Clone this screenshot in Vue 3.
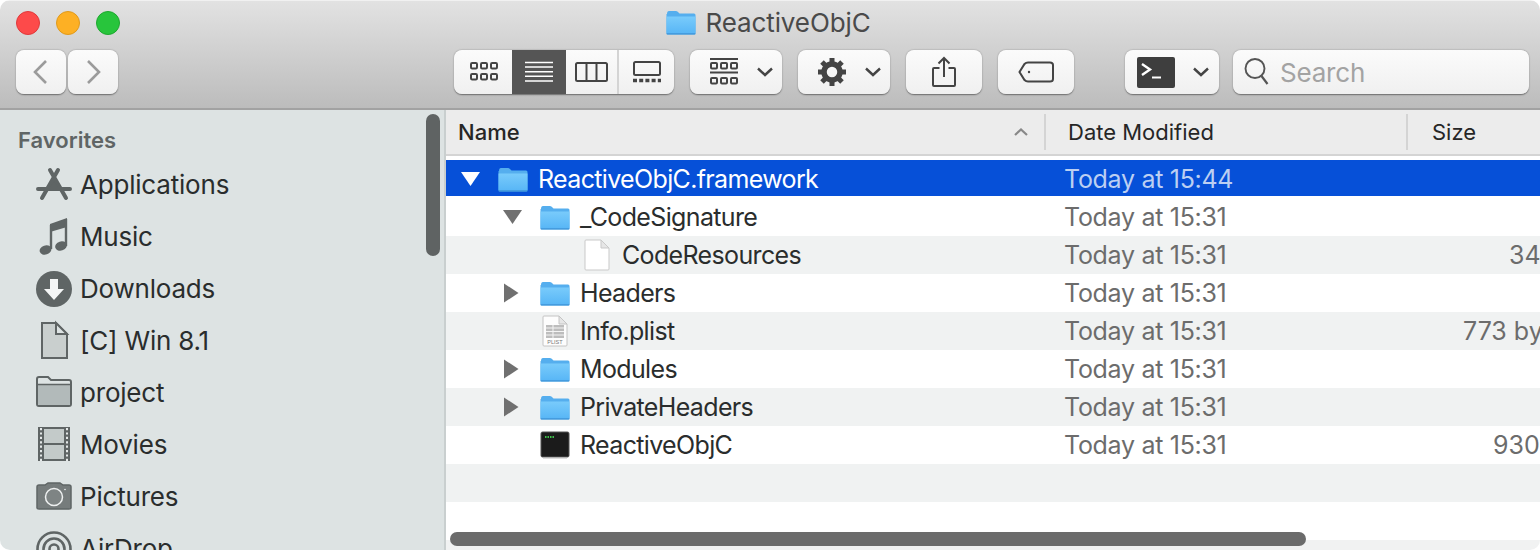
<script setup>
const favorites = [
  { name: 'Applications', icon: 'apps' },
  { name: 'Music', icon: 'music' },
  { name: 'Downloads', icon: 'downloads' },
  { name: '[C] Win 8.1', icon: 'doc' },
  { name: 'project', icon: 'folder' },
  { name: 'Movies', icon: 'movies' },
  { name: 'Pictures', icon: 'camera' },
  { name: 'AirDrop', icon: 'airdrop' },
]

// sizeAt: where the size text starts inside its column
const rows = [
  { name: 'ReactiveObjC.framework', date: 'Today at 15:44', depth: 0, arrow: 'down', icon: 'folder', selected: true },
  { name: '_CodeSignature', date: 'Today at 15:31', depth: 1, arrow: 'down', icon: 'folder' },
  { name: 'CodeResources', date: 'Today at 15:31', depth: 2, icon: 'file', size: '34 KB', sizeAt: 102 },
  { name: 'Headers', date: 'Today at 15:31', depth: 1, arrow: 'right', icon: 'folder' },
  { name: 'Info.plist', date: 'Today at 15:31', depth: 1, icon: 'plist', size: '773 bytes', sizeAt: 56 },
  { name: 'Modules', date: 'Today at 15:31', depth: 1, arrow: 'right', icon: 'folder' },
  { name: 'PrivateHeaders', date: 'Today at 15:31', depth: 1, arrow: 'right', icon: 'folder' },
  { name: 'ReactiveObjC', date: 'Today at 15:31', depth: 1, icon: 'exec', size: '930 KB', sizeAt: 86 },
]
</script>

<template>
  <div class="window">
    <svg width="0" height="0" class="defs">
      <defs>
        <linearGradient id="folderFill" x1="0" y1="0" x2="0" y2="1">
          <stop offset="0" stop-color="#79cbfb" />
          <stop offset="1" stop-color="#58b6f6" />
        </linearGradient>
        <symbol id="blueFolder" viewBox="0 0 30 25">
          <path d="M1 4 Q1 1 3 1 H10 Q11.5 1 12.5 2.5 L13.5 3.5 H28 Q29.5 3.5 29.5 5 V23 Q29.5 24.5 28 24.5 H2 Q.5 24.5 .5 23 V4 Z" fill="#55aeee" />
          <path d="M.5 6.5 H29.5 V22.8 Q29.5 23.5 28 23.5 H2 Q.5 23.5 .5 22.8 Z" fill="url(#folderFill)" />
          <path d="M.5 23.2 H29.5 V23.4 Q29.5 24.6 28 24.6 H2 Q.5 24.6 .5 23.4 Z" fill="#3f95d8" />
        </symbol>
      </defs>
    </svg>

    <header class="titlebar">
      <div class="title-row">
        <div class="lights">
          <span class="light red"></span>
          <span class="light yellow"></span>
          <span class="light green"></span>
        </div>
        <div class="title">
          <svg class="title-icon" width="30" height="25"><use href="#blueFolder" /></svg>
          <span>ReactiveObjC</span>
        </div>
        <div></div>
      </div>

      <div class="toolbar">
        <div class="nav">
          <button class="btn nav-btn">
            <svg width="50" height="44" viewBox="0 0 50 44" fill="none" stroke="#9b9b9b" stroke-width="2.6"><path d="M30 11 L19 22 L30 33" /></svg>
          </button>
          <button class="btn nav-btn">
            <svg width="50" height="44" viewBox="0 0 50 44" fill="none" stroke="#9b9b9b" stroke-width="2.6"><path d="M20 11 L31 22 L20 33" /></svg>
          </button>
        </div>

        <div class="btn views">
          <div class="seg seg-icons">
            <svg width="30" height="22" viewBox="0 0 30 22" fill="none" stroke="#444" stroke-width="2">
              <rect x="2" y="2" width="6" height="5.5" rx="1.2" /><rect x="12" y="2" width="6" height="5.5" rx="1.2" /><rect x="22" y="2" width="6" height="5.5" rx="1.2" />
              <rect x="2" y="13" width="6" height="5.5" rx="1.2" /><rect x="12" y="13" width="6" height="5.5" rx="1.2" /><rect x="22" y="13" width="6" height="5.5" rx="1.2" />
            </svg>
          </div>
          <div class="seg seg-list">
            <svg width="28" height="22" viewBox="0 0 28 22" stroke="#fff" stroke-width="1.6"><path d="M0 1.5 H28 M0 6 H28 M0 10.7 H28 M0 15.3 H28 M0 20 H28" /></svg>
          </div>
          <div class="seg seg-cols">
            <svg width="33" height="22" viewBox="0 0 33 22" fill="none" stroke="#444" stroke-width="2"><rect x="1" y="2" width="31" height="18" rx="1.5" /><path d="M11.5 2 V20 M21.5 2 V20" /></svg>
          </div>
          <div class="seg seg-gallery">
            <svg width="30" height="24" viewBox="0 0 30 24" fill="none"><rect x="2" y="2" width="26" height="13" rx="1.5" stroke="#444" stroke-width="2" /><path d="M1 20.5 H29" stroke="#444" stroke-width="3.6" stroke-dasharray="4 2.2" /></svg>
          </div>
        </div>

        <button class="btn menu arrange">
          <svg width="30" height="28" viewBox="0 0 30 28" fill="none" stroke="#444" stroke-width="2">
            <path d="M1 1 H29 M1 14.5 H29" />
            <rect x="2" y="5" width="6" height="5.5" rx="1" /><rect x="12" y="5" width="6" height="5.5" rx="1" /><rect x="22" y="5" width="6" height="5.5" rx="1" />
            <rect x="2" y="20" width="6" height="5.5" rx="1" /><rect x="12" y="20" width="6" height="5.5" rx="1" /><rect x="22" y="20" width="6" height="5.5" rx="1" />
          </svg>
          <svg class="chev" width="16" height="10" viewBox="0 0 16 10" fill="none" stroke="#444" stroke-width="2.4"><path d="M1 1.5 L8 8 L15 1.5" /></svg>
        </button>

        <button class="btn menu gear">
          <svg width="30" height="30" viewBox="0 0 30 30">
            <path d="M15 5 V1 M15 29 V25 M5 15 H1 M29 15 H25 M8 8 L5 5 M25 25 L22 22 M22 8 L25 5 M5 25 L8 22" stroke="#444" stroke-width="5" />
            <circle cx="15" cy="15" r="8" fill="none" stroke="#444" stroke-width="5.5" />
          </svg>
          <svg class="chev" width="16" height="10" viewBox="0 0 16 10" fill="none" stroke="#444" stroke-width="2.4"><path d="M1 1.5 L8 8 L15 1.5" /></svg>
        </button>

        <button class="btn share">
          <svg width="26" height="32" viewBox="0 0 26 32" fill="none" stroke="#444" stroke-width="2"><path d="M8.5 12 H3 Q2 12 2 13 V29 Q2 30 3 30 H23 Q24 30 24 29 V13 Q24 12 23 12 H17.5" /><path d="M13 21 V2 M7.5 7.5 L13 2 L18.5 7.5" /></svg>
        </button>

        <button class="btn tag">
          <svg width="36" height="22" viewBox="0 0 36 22" fill="none" stroke="#444" stroke-width="2"><path d="M10 1.5 H32 Q35 1.5 35 4 V18 Q35 20.5 32 20.5 H10 Q8 20.5 6.5 19 L1.5 11 L6.5 3 Q8 1.5 10 1.5 Z" /><circle cx="11" cy="11" r="1.2" fill="#444" stroke="none" /></svg>
        </button>

        <button class="btn terminal">
          <span class="term-box">
            <svg width="38" height="31" viewBox="0 0 38 31" fill="none" stroke="#fff" stroke-width="2.4"><path d="M5 7 L13 12.5 L5 18" /><path d="M15 20.5 H24" stroke-width="2" /></svg>
          </span>
          <svg class="chev" width="16" height="10" viewBox="0 0 16 10" fill="none" stroke="#444" stroke-width="2.4"><path d="M1 1.5 L8 8 L15 1.5" /></svg>
        </button>

        <div class="btn search">
          <svg width="26" height="30" viewBox="0 0 26 30" fill="none" stroke="#555" stroke-width="1.9"><circle cx="11" cy="11.5" r="9.5" /><path d="M17.5 19 L23.5 27" stroke-width="2.2" /></svg>
          <span>Search</span>
        </div>
      </div>
    </header>

    <div class="body">
      <aside class="sidebar">
        <div class="side-label">Favorites</div>
        <div v-for="item in favorites" :key="item.name" class="side-row">
          <svg class="side-icon" width="36" height="36" viewBox="0 0 36 36">
            <g v-if="item.icon === 'apps'">
              <path d="M18 10 L9 23 H27 Z" fill="#5f6565" />
              <path d="M14 3 L30 31 M22 3 L6 31 M2 22 H34" stroke="#5f6565" stroke-width="4" stroke-linecap="round" fill="none" />
            </g>
            <g v-else-if="item.icon === 'music'">
              <path d="M14 5 L31 -1 V8 L14 13 Z" fill="#5f6565" />
              <path d="M15 6 V30 M30 0 V27" stroke="#5f6565" stroke-width="2.4" />
              <ellipse cx="9.5" cy="31" rx="6" ry="4.6" fill="#5f6565" transform="rotate(-18 9.5 31)" />
              <ellipse cx="25" cy="27" rx="6" ry="4.6" fill="#5f6565" transform="rotate(-18 25 27)" />
            </g>
            <g v-else-if="item.icon === 'downloads'">
              <circle cx="18" cy="18" r="18" fill="#5f6565" />
              <path d="M14 8 H22 V18 H28 L18 29 L8 18 H14 Z" fill="#f4f6f6" />
            </g>
            <g v-else-if="item.icon === 'doc'">
              <path d="M6 0 H20 L31 11 V35 H6 Z" fill="#c9cfce" stroke="#5f6565" stroke-width="2" />
              <path d="M20 0 V11 H31 Z" fill="#dde3e3" stroke="#5f6565" stroke-width="2" />
            </g>
            <g v-else-if="item.icon === 'folder'">
              <path d="M1 4 Q1 2 3 2 H12 L15 5 H33 Q35 5 35 7 V29 Q35 31 33 31 H3 Q1 31 1 29 Z" fill="#dde3e3" stroke="#5f6565" stroke-width="2" />
              <path d="M2 10 H34 V29 Q34 30 33 30 H3 Q2 30 2 29 Z" fill="#b2baba" />
              <path d="M1 9.5 H35" stroke="#5f6565" stroke-width="1.6" />
            </g>
            <g v-else-if="item.icon === 'movies'">
              <rect x="2" y="0" width="32" height="34" fill="#5f6565" />
              <rect x="8" y="2" width="20" height="14" fill="#c3cac9" />
              <rect x="8" y="18" width="20" height="14" fill="#c3cac9" />
              <path d="M5 1 V34 M31 1 V34" stroke="#e4e8e8" stroke-width="2" stroke-dasharray="2.2 2.2" />
            </g>
            <g v-else-if="item.icon === 'camera'">
              <path d="M1 8 Q1 6 3 6 H9 L12 4 H24 L27 6 H33 Q35 6 35 8 V29 Q35 30 33 30 H3 Q1 30 1 29 Z" fill="#767c7c" stroke="#5f6565" stroke-width="1.5" />
              <circle cx="18" cy="18" r="8.5" fill="#7e8484" stroke="#eef0f0" stroke-width="1.5" />
              <circle cx="29" cy="10.5" r="0.8" fill="#eef0f0" />
            </g>
            <g v-else fill="none" stroke="#5f6565" stroke-width="2.6">
              <circle cx="18" cy="18" r="16.5" />
              <circle cx="18" cy="18" r="10.5" />
              <circle cx="18" cy="18" r="4.5" />
            </g>
          </svg>
          <span>{{ item.name }}</span>
        </div>
        <div class="side-thumb"></div>
      </aside>

      <section class="list">
        <div class="list-head">
          <div class="col-name head-name">
            <span>Name</span>
            <svg width="14" height="8" viewBox="0 0 14 8" fill="none" stroke="#888" stroke-width="2.2"><path d="M1 7 L7 1.5 L13 7" /></svg>
          </div>
          <div class="col-date head-date">Date Modified</div>
          <div class="col-size head-size">Size</div>
        </div>

        <div class="head-gap"></div>

        <div
          v-for="row in rows"
          :key="row.name"
          class="row"
          :class="{ selected: row.selected }"
        >
          <div class="col-name cell-name" :style="{ paddingLeft: 12 + row.depth * 42 + 'px' }">
            <span class="arrow">
              <svg v-if="row.arrow === 'down'" width="20" height="16" viewBox="0 0 20 16"><path d="M0 1 H19 L9.5 15 Z" /></svg>
              <svg v-else-if="row.arrow === 'right'" width="16" height="20" viewBox="0 0 16 20"><path d="M1 .5 L15.5 10 L1 19.5 Z" /></svg>
            </span>
            <span class="file-icon">
              <svg v-if="row.icon === 'folder'" width="30" height="25"><use href="#blueFolder" /></svg>
              <svg v-else-if="row.icon === 'file'" width="26" height="32" viewBox="0 0 26 32">
                <path d="M2 1 H17 L25 9 V30 Q25 31 24 31 H2 Q1 31 1 30 V2 Q1 1 2 1 Z" fill="#fff" stroke="#c9c9c9" />
                <path d="M17 1 V9 H25 Z" fill="#e6e6e6" stroke="#c9c9c9" />
              </svg>
              <svg v-else-if="row.icon === 'plist'" width="26" height="32" viewBox="0 0 26 32">
                <path d="M2 1 H17 L25 9 V30 Q25 31 24 31 H2 Q1 31 1 30 V2 Q1 1 2 1 Z" fill="#fdfdfd" stroke="#c4c4c4" />
                <path d="M17 1 V9 H25 Z" fill="#e6e6e6" stroke="#c4c4c4" />
                <rect x="4" y="10" width="18" height="13" fill="#bdbdbd" />
                <path d="M4 13 H22 M4 16.5 H22 M4 20 H22 M11 10 V23" stroke="#f4f4f4" stroke-width="1" />
                <text x="13" y="29" text-anchor="middle" class="plist-label">PLIST</text>
              </svg>
              <svg v-else width="30" height="28" viewBox="0 0 30 28">
                <rect x="1" y="1" width="28" height="25" rx="1.5" fill="#1b1b1b" stroke="#555" />
                <path d="M5 6 H14" stroke="#3fc04a" stroke-width="2" stroke-dasharray="1.5 1" />
                <path d="M3 27 H27" stroke="#bbb" stroke-width="1" />
              </svg>
            </span>
            <span class="file-name">{{ row.name }}</span>
          </div>
          <div class="col-date cell-date">{{ row.date }}</div>
          <div class="col-size cell-size" :style="{ paddingLeft: (row.sizeAt || 0) + 'px' }">{{ row.size }}</div>
        </div>

        <div class="row empty"></div>

        <div class="scroll-track"></div>
        <div class="scroll-thumb"></div>
      </section>
    </div>
  </div>
</template>

<style>
html, body {
  background: #fff;
  overflow: hidden;
}
</style>

<style scoped>
.window {
  width: 1540px;
  height: 550px;
  border-radius: 10px;
  overflow: hidden;
  display: flex;
  flex-direction: column;
  font-family: Inter, "Liberation Sans", sans-serif;
  color: #2a2d2d;
}

.defs {
  position: absolute;
}

.titlebar {
  height: 110px;
  box-sizing: border-box;
  flex: none;
  background: linear-gradient(#e2e2e2, #bcbcbc);
  border-top: 1px solid #f1f1f1;
  border-bottom: 2px solid #a2a2a2;
}

.title-row {
  height: 43px;
  display: grid;
  grid-template-columns: 1fr auto 1fr;
  align-items: center;
  padding: 0 16px;
}

.lights {
  display: flex;
  gap: 16px;
}

.light {
  width: 24px;
  height: 24px;
  border-radius: 50%;
  box-sizing: border-box;
  border: 1px solid;
}

.red { background: #fd4a4a; border-color: #e0393b; }
.yellow { background: #fdb024; border-color: #e09a1c; }
.green { background: #28c53c; border-color: #1ea82f; }

.title {
  display: flex;
  align-items: center;
  gap: 9px;
  font-size: 26px;
  color: #4a4a4a;
  margin-left: -3px;
  letter-spacing: -0.1px;
}

.toolbar {
  display: flex;
  height: 44px;
  margin-top: 6px;
  padding: 0 11px 0 16px;
}

.btn {
  height: 44px;
  box-sizing: border-box;
  padding: 0;
  background: linear-gradient(#fbfbfb, #f0f0f0);
  border: none;
  border-radius: 8px;
  box-shadow: 0 0.5px 1.5px rgba(0, 0, 0, 0.45);
  display: flex;
  align-items: center;
  justify-content: center;
}

.nav {
  display: flex;
  gap: 2px;
}

.nav-btn {
  width: 50px;
}

.views {
  margin-left: 336px;
  width: 220px;
  overflow: hidden;
  justify-content: flex-start;
}

.seg {
  height: 100%;
  display: flex;
  align-items: center;
  justify-content: center;
  box-sizing: border-box;
}

.seg-icons { width: 58px; padding-left: 2px; }
.seg-list { width: 54px; background: #555; }
.seg-cols { width: 53px; border-right: 2px solid #d4d4d4; }
.seg-gallery { width: 55px; }

.menu {
  width: 92px;
  margin-left: 16px;
  gap: 18px;
  padding-left: 10px;
}

.share,
.tag {
  width: 76px;
  margin-left: 16px;
}

.terminal {
  width: 94px;
  margin-left: 51px;
  gap: 18px;
  padding-left: 1px;
}

.term-box {
  width: 38px;
  height: 31px;
  background: #3e3e3e;
  border-radius: 2px;
  display: block;
}

.term-box svg {
  display: block;
}

.search {
  width: 296px;
  margin-left: 14px;
  justify-content: flex-start;
  gap: 10px;
  padding-left: 11px;
  font-size: 26px;
  letter-spacing: -0.2px;
  color: #a3a3a3;
}

.body {
  flex: 1;
  min-height: 0;
  display: flex;
}

.sidebar {
  width: 444px;
  flex: none;
  position: relative;
  overflow: hidden;
  background: #dde3e3;
}

.side-label {
  height: 49px;
  box-sizing: border-box;
  padding: 16px 0 0 18px;
  font-size: 22px;
  line-height: 28px;
  font-weight: 600;
  color: #5f6565;
}

.side-row {
  height: 52px;
  display: flex;
  align-items: center;
  padding-left: 36px;
  gap: 8px;
  font-size: 26px;
  letter-spacing: -0.2px;
}

.side-row span {
  padding-bottom: 2px;
}

.side-icon {
  flex: none;
  overflow: visible;
}

.side-thumb {
  position: absolute;
  top: 4px;
  left: 426px;
  width: 14px;
  height: 142px;
  border-radius: 7px;
  background: #5f6363;
}

.list {
  flex: 1;
  min-width: 0;
  position: relative;
  overflow: hidden;
  background: #fff;
  border-left: 2px solid #c9cfcf;
}

.list-head {
  height: 46px;
  box-sizing: border-box;
  display: flex;
  align-items: center;
  background: #ececec;
  border-bottom: 2px solid #d4d4d4;
  font-size: 22px;
  color: #262626;
}

.head-gap {
  height: 4px;
}

.row {
  height: 38px;
  display: flex;
  align-items: center;
  font-size: 25px;
  white-space: nowrap;
}

.row:nth-of-type(even) {
  background: #fff;
}

.row:nth-of-type(odd) {
  background: #f0f2f2;
}

.row.selected {
  height: 36px;
  box-sizing: border-box;
  padding-top: 2px;
  margin-bottom: 2px;
  background: #0650d8;
  color: #fff;
}

.col-name {
  width: 599px;
  flex: none;
  box-sizing: border-box;
}

.col-date {
  width: 362px;
  flex: none;
  box-sizing: border-box;
}

.col-size {
  flex: none;
  width: 200px;
}

.head-name {
  display: flex;
  align-items: center;
  justify-content: space-between;
  padding: 0 16px 0 12px;
  font-weight: 500;
  height: 36px;
  border-right: 2px solid #d4d4d4;
  width: 600px;
}

.head-date {
  padding-left: 22px;
  height: 36px;
  line-height: 36px;
  border-right: 2px solid #d4d4d4;
}

.head-size {
  padding-left: 24px;
}

.cell-name {
  display: flex;
  align-items: center;
  letter-spacing: -0.65px;
}

.arrow {
  width: 40px;
  flex: none;
  padding-left: 3px;
  box-sizing: border-box;
  display: flex;
}

.arrow svg {
  fill: #707070;
}

.selected .arrow svg {
  fill: #fff;
}

.file-icon {
  width: 30px;
  height: 32px;
  margin-right: 10px;
  flex: none;
  display: flex;
  align-items: center;
  justify-content: center;
}

.plist-label {
  font-size: 5.5px;
  font-family: "Liberation Sans", sans-serif;
  letter-spacing: 0;
  fill: #777;
}

.cell-date {
  padding-left: 19px;
  color: #6c6c6c;
  letter-spacing: -0.3px;
}

.selected .cell-date {
  color: #bccff2;
}

.cell-size {
  color: #6c6c6c;
  box-sizing: border-box;
}

.scroll-track {
  position: absolute;
  left: 0;
  right: 0;
  bottom: 0;
  height: 10px;
  background: #f1f2f2;
}

.scroll-thumb {
  position: absolute;
  left: 4px;
  bottom: 4px;
  width: 856px;
  height: 14px;
  border-radius: 7px;
  background: #6b6b6b;
}
</style>
